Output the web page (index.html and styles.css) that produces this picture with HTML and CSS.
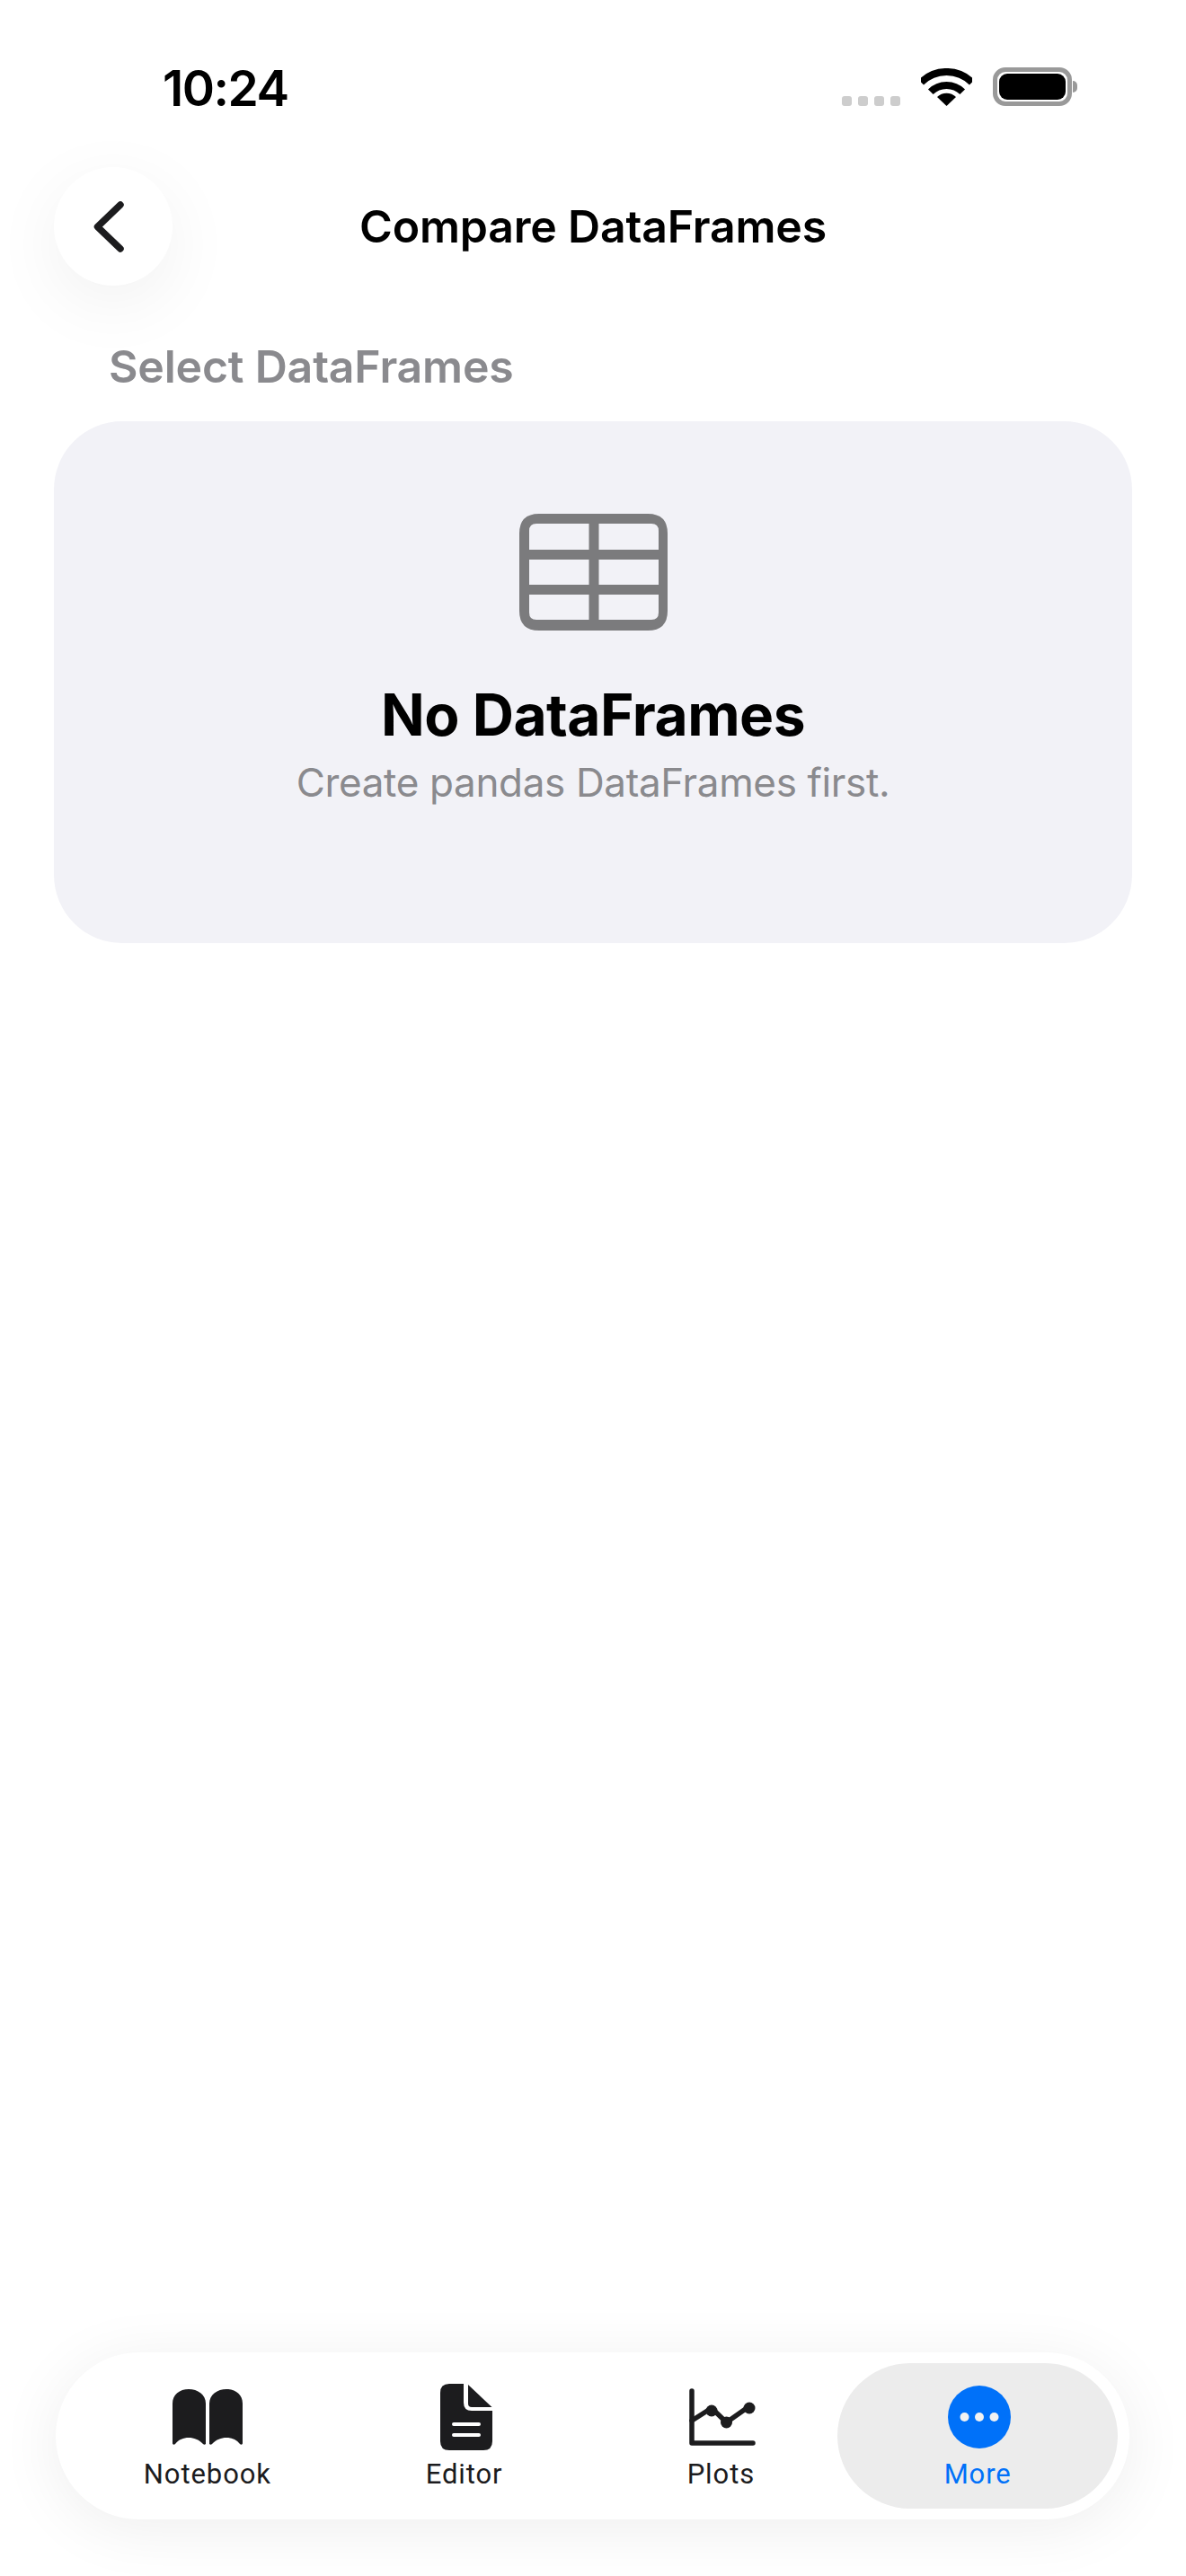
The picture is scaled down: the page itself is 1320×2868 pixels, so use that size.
FILE: index.html
```html
<!DOCTYPE html>
<html lang="en">
<head>
<meta charset="UTF-8">
<title>Compare DataFrames</title>
<link rel="stylesheet" href="styles.css">
</head>
<body>
	<div class="screen">
		<div class="status">
			<span class="time">10:24</span>
			<div class="status-icons">
				<div class="dots"><i></i><i></i><i></i><i></i></div>
				<svg class="wifi" width="57" height="42" viewBox="0 0 57 42" fill="none" stroke="#000" stroke-width="8">
					<path d="M0.2 15.7A40 40 0 0 1 56.8 15.7"/>
					<path d="M10.8 26.3A25 25 0 0 1 46.2 26.3"/>
					<path d="M28.5 42L18 32A15 15 0 0 1 39 32Z" fill="#000" stroke="none"/>
				</svg>
				<div class="battery"><div class="battery-fill"></div></div>
			</div>
		</div>

		<div class="nav">
			<a class="back" href="#none">
				<svg width="132" height="132" viewBox="0 0 132 132" fill="none" stroke="#1c1c1e" stroke-width="7.5" stroke-linecap="round" stroke-linejoin="round">
					<path d="M74 42L48.5 66.5L74 91"/>
				</svg>
			</a>
			<h1 class="title">Compare DataFrames</h1>
		</div>

		<h2 class="section">Select DataFrames</h2>

		<div class="card">
			<svg class="table-icon" width="165" height="130" viewBox="0 0 165 130">
				<path fill="#7b7b7d" fill-rule="evenodd" d="M22 0H143Q165 0 165 22V108Q165 130 143 130H22Q0 130 0 108V22Q0 0 22 0ZM19 11Q11 11 11 19V40H77.5V11ZM88.5 11V40H155V19Q155 11 147 11ZM11 51V79H77.5V51ZM88.5 51V79H155V51ZM11 90V110Q11 118 19 118H77.5V90ZM88.5 90V118H147Q155 118 155 110V90Z"/>
			</svg>
			<h3 class="empty-title">No DataFrames</h3>
			<p class="empty-text">Create pandas DataFrames first.</p>
		</div>

		<div class="tabbar">
			<a class="tab" href="#none">
				<span class="tab-icon">
					<svg width="78" height="62" viewBox="0 0 78 62" fill="#1c1c1e">
						<path d="M0 16C0 6 8 0 18 0C28 0 37 6 37 16V61C36 62 35 62 34 61C29 56 24 54 18 54C12 54 7 56 3 61C2 62 0 62 0 60Z"/>
						<path d="M78 16C78 6 70 0 60 0C50 0 41 6 41 16V61C42 62 43 62 44 61C49 56 54 54 60 54C66 54 71 56 75 61C76 62 78 62 78 60Z"/>
					</svg>
				</span>
				<span class="tab-label">Notebook</span>
			</a>
			<a class="tab" href="#none">
				<span class="tab-icon">
					<svg class="nudge-doc" width="58" height="74" viewBox="0 0 58 74" fill="#1c1c1e">
						<path d="M10 0H26V21Q26 30 35 30H58V64Q58 74 48 74H10Q0 74 0 64V10Q0 0 10 0Z"/>
						<path d="M31 1L57.5 26H35Q31 26 31 22Z"/>
						<path d="M15 45H43M15 57H43" stroke="#fff" stroke-width="4" stroke-linecap="round"/>
					</svg>
				</span>
				<span class="tab-label">Editor</span>
			</a>
			<a class="tab" href="#none">
				<span class="tab-icon">
					<svg class="nudge" width="74" height="64" viewBox="0 0 74 64" fill="none" stroke="#1c1c1e" stroke-width="5.5" stroke-linecap="round" stroke-linejoin="round">
						<path d="M3 3V61H71"/>
						<path d="M3 36L25 22L41.5 38L67 20"/>
						<g fill="#1c1c1e" stroke="none">
							<circle cx="25" cy="25" r="6.5"/>
							<circle cx="41.5" cy="38" r="6.5"/>
							<circle cx="67" cy="22" r="6.5"/>
						</g>
					</svg>
				</span>
				<span class="tab-label">Plots</span>
			</a>
			<a class="tab on" href="#none">
				<span class="tab-icon">
					<svg class="nudge" width="70" height="70" viewBox="0 0 70 70">
						<circle cx="35" cy="35" r="35" fill="#0071f9"/>
						<circle cx="18.5" cy="35" r="5" fill="#f2f2f2"/>
						<circle cx="35" cy="35" r="5" fill="#f2f2f2"/>
						<circle cx="51.5" cy="35" r="5" fill="#f2f2f2"/>
					</svg>
				</span>
				<span class="tab-label">More</span>
			</a>
		</div>
	</div>
</body>
</html>
```

FILE: styles.css
```css
*{margin: 0; padding: 0; box-sizing: border-box;}
a{text-decoration: none; color: inherit;}
body{background: #fff; font-family: "Inter", "Liberation Sans", sans-serif; color: #000;}

.screen{
	width: 1320px;
	height: 2868px;
	display: flex;
	flex-direction: column;
	overflow: hidden;
}

/* status bar */
.status{
	height: 186px;
	padding: 70px 127px 0 181px;
	display: flex;
	justify-content: space-between;
	align-items: flex-start;
}
.time{font-size: 55px; line-height: 56px; font-weight: 600; letter-spacing: -1.5px;}
.status-icons{display: flex; align-items: flex-end; padding-top: 5px;}
.dots{display: flex; gap: 7px; margin-right: 23px;}
.dots i{width: 11px; height: 11px; border-radius: 3px; background: #cdcdcd;}
.wifi{margin-right: 23px;}
.battery{
	position: relative;
	width: 88px;
	height: 43px;
	border: 5px solid #999;
	border-radius: 14px;
	padding: 2px;
}
.battery:after{
	content: "";
	position: absolute;
	right: -11px;
	top: 10px;
	width: 5px;
	height: 13px;
	background: #999;
	border-radius: 0 5px 5px 0;
}
.battery-fill{height: 100%; background: #000; border-radius: 9px;}

/* nav */
.nav{
	height: 132px;
	padding: 0 60px;
	display: grid;
	grid-template-columns: 132px 1fr 132px;
	align-items: center;
}
.back{
	display: block;
	width: 132px;
	height: 132px;
	border-radius: 50%;
	background: #fff;
	box-shadow: 0 20px 80px rgba(0,0,0,.06);
}
.title{font-size: 50px; line-height: 60px; font-weight: 600; text-align: center; letter-spacing: -.2px;}

.section{
	padding: 60px 0 0 121px;
	height: 151px;
	font-size: 50px;
	line-height: 60px;
	font-weight: 600;
	letter-spacing: -.2px;
	color: #8a8a8e;
}

.card{
	width: 1200px;
	height: 581px;
	margin-left: 60px;
	padding-top: 103px;
	border-radius: 76px;
	background: #f2f2f7;
	display: flex;
	flex-direction: column;
	align-items: center;
}
.empty-title{margin-top: 54px; font-size: 64px; line-height: 80px; font-weight: 700; letter-spacing: -.5px;}
.empty-text{margin-top: 7px; font-size: 44px; line-height: 56px; letter-spacing: -.35px; color: #8a8a8e;}

/* tab bar */
.tabbar{
	width: 1195px;
	height: 186px;
	margin: auto 0 63px 62px;
	padding: 12px 26px;
	border-radius: 93px;
	background: #fff;
	box-shadow: 0 10px 70px rgba(0,0,0,.07);
	display: grid;
	grid-template-columns: repeat(4, 1fr);
}
.tab{
	display: flex;
	flex-direction: column;
	align-items: center;
	color: #1c1c1e;
}
.tab-icon{height: 78px; margin-top: 21px; display: flex; align-items: center; justify-content: center;}
.nudge{margin-left: 3px;}
.nudge-doc{margin-left: 4px;}
.tab-label{margin-top: 6px; font-family: "Roboto", "Liberation Sans", sans-serif; font-size: 31px; line-height: 38px; font-weight: 400; letter-spacing: .9px;}
.tab.on{margin: 0 -13px; border-radius: 81px; background: #ececec; color: #0071f9;}
```
